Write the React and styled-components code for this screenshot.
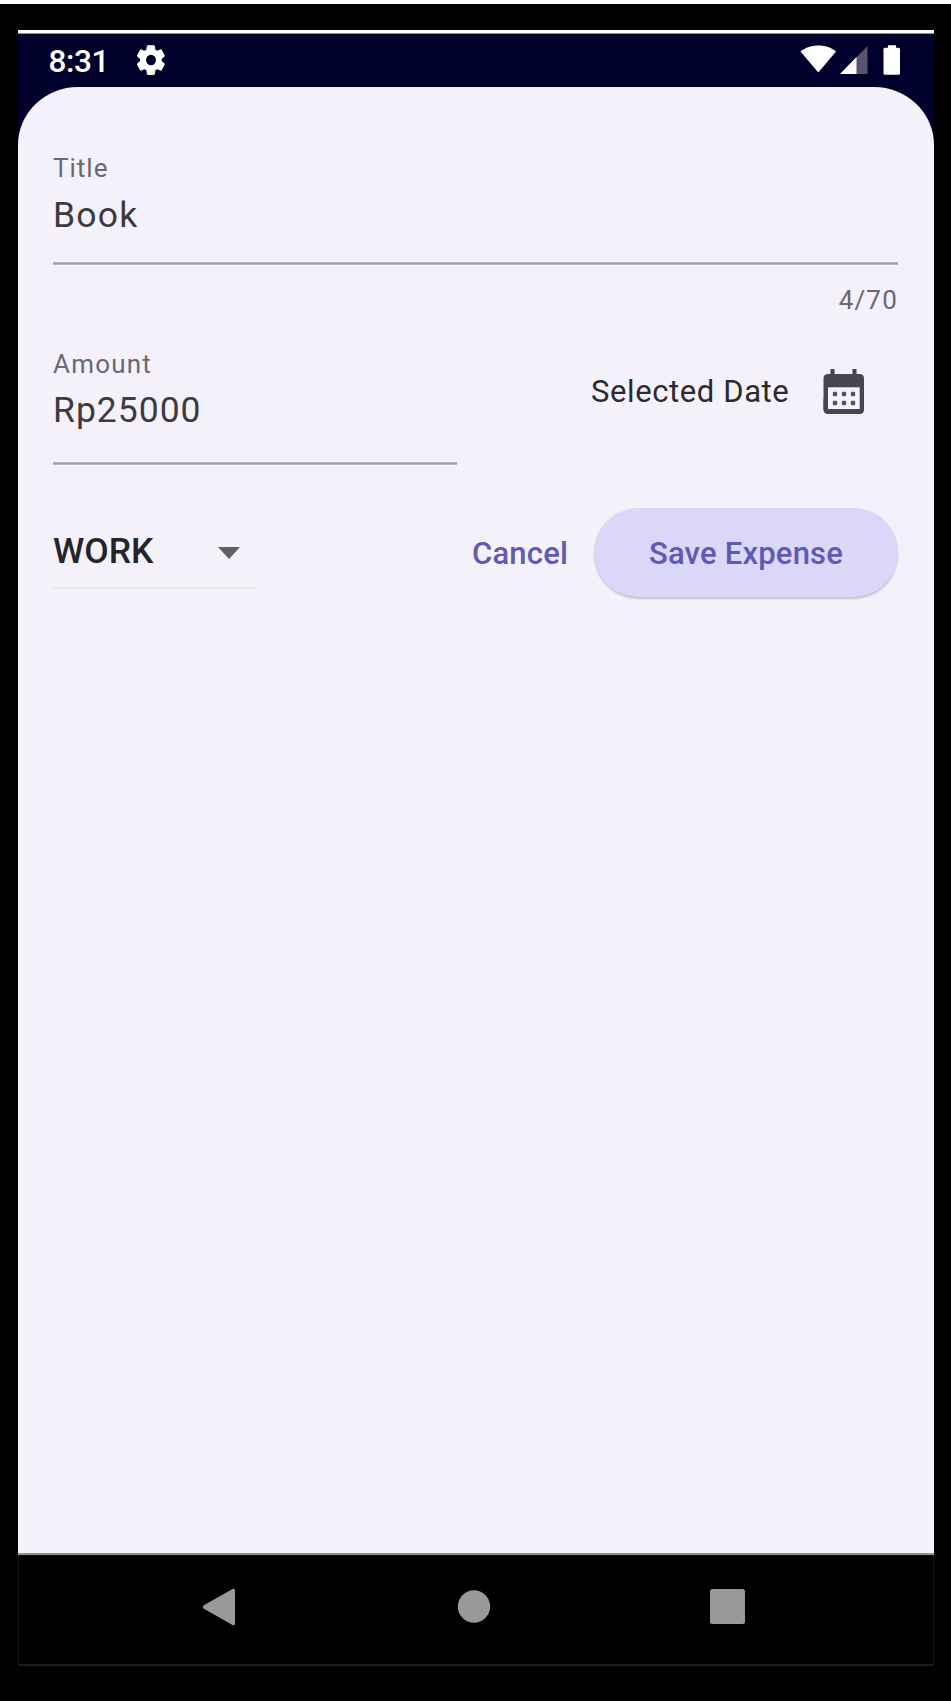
import React from "react";
import styled, { createGlobalStyle } from "styled-components";

const GlobalStyle = createGlobalStyle`
  * { box-sizing: border-box; }
  body { margin: 0; background: #000; font-family: Roboto, "Liberation Sans", sans-serif; }
`;

const Frame = styled.div`
  width: 951px;
  height: 1701px;
  padding: 26px 17px 0 17.5px;
  background: #000;
  border-top: 4px solid #fdfdfd;
  overflow: hidden;
`;

const Screen = styled.main`
  display: flex;
  flex-direction: column;
  width: 916px;
  height: 1636px;
  border-top: 3px solid #fff;
  background: #00002c;
`;

const StatusBar = styled.header`
  display: flex;
  align-items: center;
  height: 54px;
  padding: 0 31.5px 0 31px;
  border-top: 1px solid #8a8a9c;
  color: #fff;
`;

const Clock = styled.span`
  font-size: 31.5px;
  line-height: 40px;
  font-weight: 500;
  letter-spacing: -0.4px;
  width: 88px;
  margin-top: 2px;
  white-space: nowrap;
`;

const StatusIcons = styled.div`
  display: flex;
  align-items: center;
  margin-left: auto;
`;

const Sheet = styled.section`
  flex: 1;
  padding: 65px 35.5px 0;
  background: #f4f1fb;
  border-radius: 60px 60px 0 0 / 58px 58px 0 0;
  border-bottom: 2px solid #8f8d94;
`;

const Label = styled.label`
  display: block;
  font-size: 26px;
  line-height: 32px;
  letter-spacing: ${(p) => p.$spacing || "1px"};
  color: #6b6872;
`;

const Value = styled.div`
  margin-top: ${(p) => p.$top}px;
  font-size: 35.5px;
  line-height: 44px;
  letter-spacing: ${(p) => p.$spacing};
  color: #3b3a40;
`;

const Underline = styled.div`
  height: 3px;
  margin-top: ${(p) => p.$top}px;
  background: linear-gradient(#bab7c0, #a5a2ab 50%, #c4c1ca);
`;

const Counter = styled.div`
  margin-top: 19px;
  font-size: 26px;
  line-height: 32px;
  letter-spacing: 1.2px;
  text-align: right;
  color: #6b6872;
`;

const AmountRow = styled.div`
  display: flex;
  justify-content: space-between;
  margin-top: 32px;
`;

const AmountField = styled.div`
  width: 404px;
`;

const DatePicker = styled.div`
  display: flex;
  align-items: flex-start;
  padding: 21px 33px 0 0;
`;

const DateText = styled.span`
  margin-top: 3px;
  width: 232px;
  font-size: 31px;
  line-height: 40px;
  letter-spacing: 0.6px;
  white-space: nowrap;
  color: #2b2a2f;
`;

const Actions = styled.div`
  display: flex;
  align-items: flex-start;
  margin-top: 43px;
`;

const Dropdown = styled.div`
  display: flex;
  align-items: center;
  justify-content: space-between;
  width: 204px;
  height: 81px;
  padding: 7px 17px 0 0;
  border-bottom: 2px solid #e8e4ec;
  font-size: 35.5px;
  font-weight: 500;
  color: #252429;

  svg {
    margin-top: 4px;
  }
`;

const Button = styled.button`
  height: 89px;
  padding: 2px 0 0;
  border: 0;
  border-radius: 45px;
  font: 500 31px/40px Roboto, "Liberation Sans", sans-serif;
  letter-spacing: ${(p) => p.$spacing};
  white-space: nowrap;
  color: #6059b5;
  width: ${(p) => p.$width}px;
  margin-left: ${(p) => p.$left}px;
  background: ${(p) => (p.$filled ? "#dad7f9" : "transparent")};
  box-shadow: ${(p) => (p.$filled ? "0 2px 2px rgba(60, 55, 80, 0.25)" : "none")};
`;

const NavBar = styled.nav`
  display: flex;
  align-items: center;
  height: 111px;
  padding: 0 187.5px 7px 183.5px;
  justify-content: space-between;
  background: #000;
  border: 1px solid #101010;
  border-bottom: 2px solid #1c1c1c;
`;

const GearIcon = styled.svg`
  margin-top: -2px;
`;

const Gear = () => (
  <GearIcon width="28" height="30" viewBox="1.6 1.5 20.8 21" preserveAspectRatio="none">
    <path
      fill="#fff"
      stroke="#fff"
      strokeWidth="1"
      strokeLinejoin="round"
      d="M19.4 13a7.5 7.5 0 0 0 0-2l2.1-1.7a.5.5 0 0 0 .1-.6l-2-3.4a.5.5 0 0 0-.6-.2l-2.5 1a7.3 7.3 0 0 0-1.7-1l-.4-2.6a.5.5 0 0 0-.5-.4h-4a.5.5 0 0 0-.5.4L9 5.1a7.3 7.3 0 0 0-1.7 1l-2.500-1a.5.5 0 0 0-.6.2l-2 3.4a.5.5 0 0 0 .1.6L4.500 11a7.500 7.500 0 0 0 0 2l-2.200 1.700a.5.5 0 0 0-.1.600l2 3.400c.1.2.4.3.6.2l2.500-1a7.300 7.300 0 0 0 1.700 1l.4 2.600c0 .3.2.5.5.5h4c.3 0 .5-.2.5-.5l.4-2.600a7.300 7.300 0 0 0 1.700-1l2.500 1c.2.1.5 0 .6-.2l2-3.400a.5.5 0 0 0-.1-.6zM12 16.200a4.200 4.200 0 1 1 0-8.400 4.200 4.200 0 0 1 0 8.400z"
    />
  </GearIcon>
);

const Signals = () => (
  <svg width="102" height="32" viewBox="800 44.5 102 32">
    <path fill="#fff" d="M800.5 51C810 43 827 43 836 51L818.3 72Z" />
    <path fill="#5b5270" d="M867.5 45.5V73.5H840Z" />
    <path fill="#fff" d="M856.5 56.5V73.5H840Z" />
    <path fill="#fff" d="M888 44.7h8v2.500h2.500q1.500 0 1.500 1.500v24q0 1.500-1.500 1.500h-13.500q-1.500 0-1.500-1.500v-24q0-1.500 1.500-1.500h3Z" />
  </svg>
);

const Calendar = () => (
  <svg width="42" height="46" viewBox="0 0 42 46">
    <path fill="#47464f" d="M7.5 0h4v5h18V0h4v5h3q4.500 0 4.500 4.500v30.500q0 5-4.500 5H5q-4.500 0-4.500-5V9.500q0-4.500 4.500-4.500h2.500Z M5 18.500h32Z" />
    <path fill="#47464f" d="M.5 30h40.500v10q0 4.500-4.500 4.500H5q-4.500 0-4.500-4.500Z" />
    <path fill="#f4f1fb" d="M5 18.300h31.700v21.700H5Z" />
    <g fill="#55545d">
      {[12, 21, 30].map((x) =>
        [25, 34].map((y) => <rect key={`${x}-${y}`} x={x - 2.2} y={y - 2.2} width="4.4" height="4.4" rx="1.2" />)
      )}
    </g>
  </svg>
);

const Caret = () => (
  <svg width="22" height="12" viewBox="0 0 22 12">
    <path fill="#605f63" d="M0 0h22L11 12Z" />
  </svg>
);

export default function App() {
  return (
    <>
      <GlobalStyle />
      <Frame>
        <Screen>
          <StatusBar>
            <Clock>8:31</Clock>
            <Gear />
            <StatusIcons>
              <Signals />
            </StatusIcons>
          </StatusBar>
          <Sheet>
            <Label>Title</Label>
            <Value $top={9} $spacing="1.2px">Book</Value>
            <Underline $top={25} />
            <Counter>4/70</Counter>
            <AmountRow>
              <AmountField>
                <Label $spacing="1.2px">Amount</Label>
                <Value $top={8} $spacing="1px">Rp25000</Value>
                <Underline $top={30} />
              </AmountField>
              <DatePicker>
                <DateText>Selected Date</DateText>
                <Calendar />
              </DatePicker>
            </AmountRow>
            <Actions>
              <Dropdown>
                WORK
                <Caret />
              </Dropdown>
              <Button $width={120} $left={203} $spacing="0.2px">Cancel</Button>
              <Button $filled $width={304} $left={14} $spacing="0.2px">Save Expense</Button>
            </Actions>
          </Sheet>
          <NavBar>
            <svg width="34" height="38" viewBox="0 0 34 38">
              <path fill="#999" d="M30.5 1Q33 0 33 2.500V35.500Q33 38 30.500 37L1.500 20.500Q0 19 1.500 17.500Z" />
            </svg>
            <svg width="33" height="33" viewBox="0 0 33 33">
              <circle cx="17" cy="16.5" r="16.2" fill="#999" />
            </svg>
            <svg width="35" height="35" viewBox="0 0 35 35">
              <rect width="35" height="35" rx="2.5" fill="#999" />
            </svg>
          </NavBar>
        </Screen>
      </Frame>
    </>
  );
}
